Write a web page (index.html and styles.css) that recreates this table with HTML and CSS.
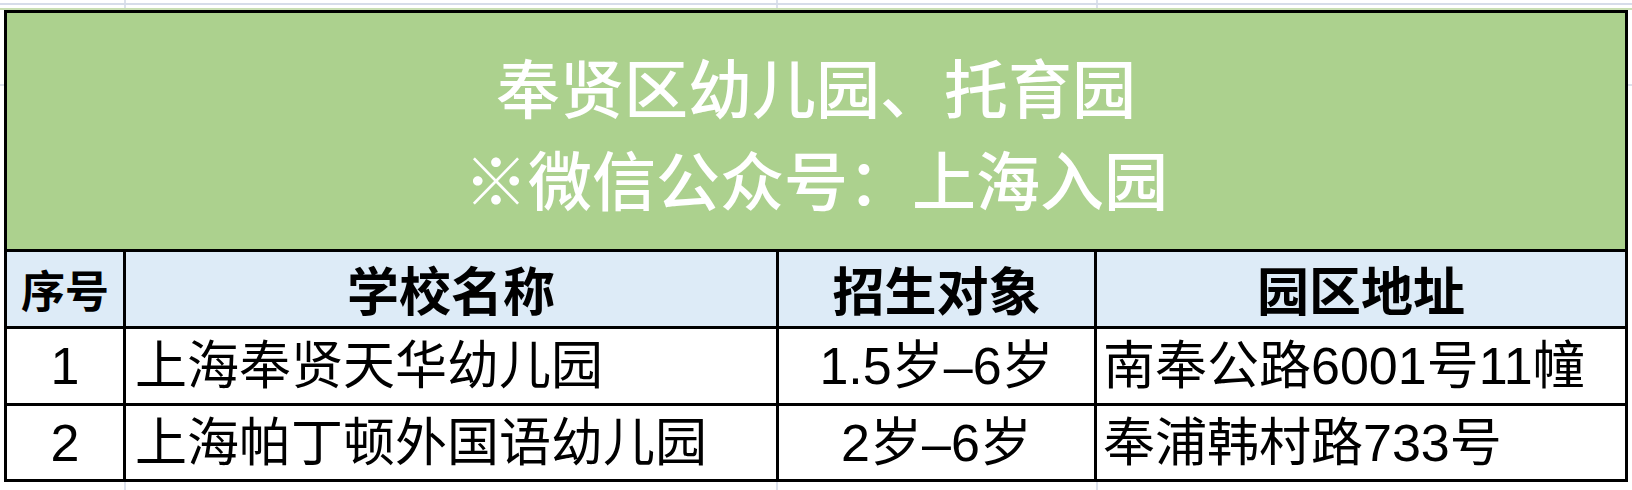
FILE: index.html
```html
<!DOCTYPE html>
<html lang="zh-CN">
<head>
<meta charset="utf-8">
<title>奉贤区幼儿园、托育园</title>
<link rel="stylesheet" href="styles.css">
</head>
<body>
<table class="sheet">
  <colgroup>
    <col class="c-no">
    <col class="c-name">
    <col class="c-age">
    <col class="c-addr">
  </colgroup>
  <tr class="r-title">
    <td class="title" colspan="4">奉贤区幼儿园、托育园<br>※微信公众号：上海入园</td>
  </tr>
  <tr class="r-head">
    <th class="h-no">序号</th>
    <th>学校名称</th>
    <th>招生对象</th>
    <th>园区地址</th>
  </tr>
  <tr class="r-data">
    <td class="no">1</td>
    <td class="name">上海奉贤天华幼儿园</td>
    <td class="age">1.5岁–6岁</td>
    <td class="addr">南奉公路6001号11幢</td>
  </tr>
  <tr class="r-data r-last">
    <td class="no">2</td>
    <td class="name">上海帕丁顿外国语幼儿园</td>
    <td class="age">2岁–6岁</td>
    <td class="addr">奉浦韩村路733号</td>
  </tr>
</table>
</body>
</html>
```

FILE: styles.css
```css
html, body {
  margin: 0;
  padding: 0;
}

body {
  width: 1632px;
  height: 490px;
  background-color: #ffffff;
  background-image:
    linear-gradient(to bottom, transparent 3px, #d6dce9 3px, #d6dce9 5px, transparent 5px),
    linear-gradient(to bottom, transparent 8px, #c9dfb4 8px, #c9dfb4 10px, transparent 10px),
    linear-gradient(to right, transparent 124px, #dce1ec 124px, #dce1ec 126px, transparent 126px),
    linear-gradient(to right, transparent 776px, #dce1ec 776px, #dce1ec 778px, transparent 778px),
    linear-gradient(to right, transparent 1096px, #dce1ec 1096px, #dce1ec 1098px, transparent 1098px),
    linear-gradient(to bottom, transparent 84px, #dce1ec 84px, #dce1ec 86px, transparent 86px);
  background-repeat: no-repeat;
  font-family: "Liberation Sans", "Noto Sans CJK SC", sans-serif;
  color: #000;
  overflow: hidden;
}

.sheet {
  margin: 10px 0 0 4px;
  width: 1624px;
  border-collapse: collapse;
  table-layout: fixed;
  border: 3px solid #000;
}

.c-no { width: 119px; }
.c-name { width: 653px; }
.c-age { width: 318px; }
.c-addr { width: 531px; }

.sheet td,
.sheet th {
  border: 3px solid #000;
  padding: 0;
  vertical-align: middle;
  white-space: nowrap;
  overflow: hidden;
}

.r-title { height: 239px; }
.r-head { height: 77px; }
.r-data { height: 77px; }
.r-last { height: 76px; }

.title {
  background: #acd18e;
  color: #ffffff;
  text-align: center;
  font-family: "Noto Sans CJK SC", sans-serif;
  font-weight: 500;
  font-size: 64px;
  line-height: 92px;
}

.r-head th {
  background: #ddebf7;
  font-family: "Noto Sans CJK SC", sans-serif;
  font-weight: 700;
  font-size: 52px;
  line-height: 60px;
  text-align: center;
}

.r-head .h-no {
  font-size: 44px;
}

.r-data td {
  background: #ffffff;
  font-size: 52px;
  line-height: 60px;
  font-weight: 400;
}

.r-data .no {
  text-align: center;
}

.r-data .name {
  padding-left: 9px;
  text-align: left;
}

.r-data .age {
  text-align: center;
}

.r-data .addr {
  padding-left: 6px;
  text-align: left;
}
```
